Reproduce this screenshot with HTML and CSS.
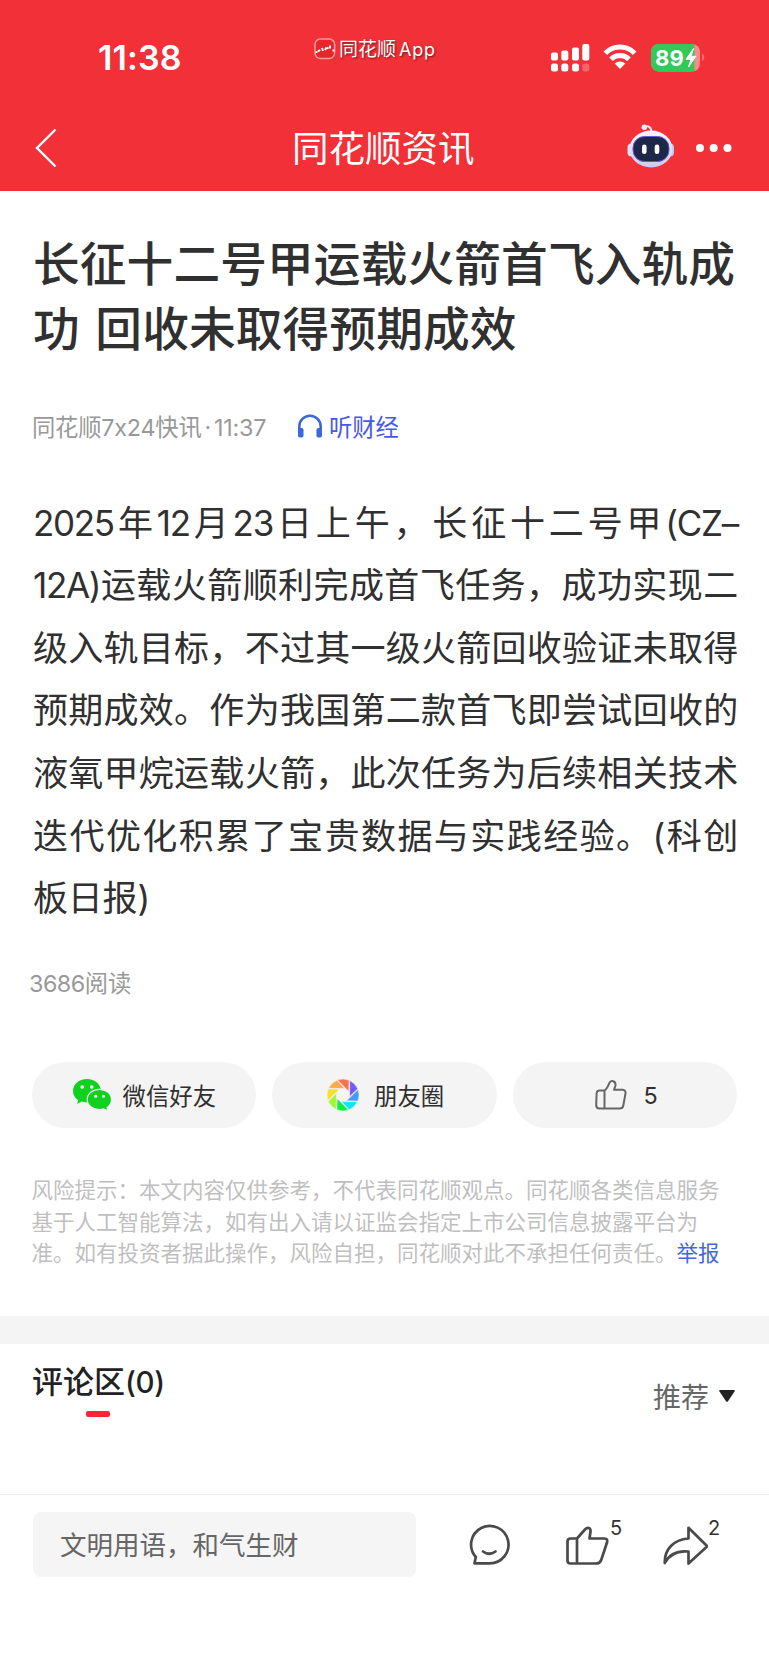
FILE: index.html
```html
<!DOCTYPE html>
<html lang="zh-CN">
<head>
<meta charset="utf-8">
<title>同花顺资讯</title>
<link rel="stylesheet" href="styles.css">
</head>
<body>
<header class="top">
  <div class="status">
    <div class="time">11:38</div>
    <div class="appmark">
      <svg width="22" height="22" viewBox="0 0 22 22"><rect x="1" y="1" width="19.600" height="19.600" rx="5.500" fill="#e5262b" stroke="#ff9a9c" stroke-width="1.500"/><path d="M1.500 14h2M4 13.500l2-1.500M8 10l1 3M11 12l1.500-2.500M13 10.500l1.500-1M16 7.500v3M18.500 12.500h2" stroke="#fff" stroke-width="2" fill="none"/></svg>
      <span>同花顺</span><span class="app">App</span>
    </div>
    <div class="sys">
      <svg class="signal" width="39" height="28" viewBox="0 0 39 28" fill="#fff"><rect x="0" y="8.500" width="7" height="8" rx="2"/><rect x="10.300" y="6.500" width="7" height="10" rx="2"/><rect x="21" y="3.500" width="7" height="13" rx="2"/><rect x="31.300" y="0" width="7" height="16.500" rx="2"/><rect x="0" y="19.500" width="7" height="8" rx="2.500"/><rect x="10.300" y="19.500" width="7" height="8" rx="2.500"/><rect x="21" y="19.500" width="7" height="8" rx="2.500"/><rect x="31.300" y="19.500" width="7" height="8" rx="2.500" opacity=".25"/></svg>
      <svg class="wifi" width="34" height="26" viewBox="0 0 34 26" fill="none" stroke="#fff" stroke-width="5"><path d="M2.300 9.300C10.500 1 23.500 1 31.700 9.300"/><path d="M8 15.300c5-5 13-5 18 0"/><path d="M11.700 19.500c3-2.800 7.600-2.800 10.600 0L17 25z" fill="#fff" stroke="none"/></svg>
      <svg class="battery" width="54" height="28" viewBox="0 0 54 28"><defs><clipPath id="b"><rect x="0" y="0" width="49" height="27.500" rx="8"/></clipPath></defs><g clip-path="url(#b)"><rect width="49" height="28" fill="#f88"/><rect width="43.500" height="28" fill="#34c759"/></g><path d="M51 9.500c3 1.500 3 6.500 0 8z" fill="#f6696e"/><text x="4" y="22" class="level">89</text><path d="M42.500 4.500L35 15.300h5L37.500 23 45 12.300h-5z" fill="#fff" stroke="#fff"/></svg>
    </div>
  </div>
  <div class="nav">
    <svg class="back" width="22" height="40" viewBox="0 0 22 40"><path d="M20.500 1.500L2 20l18.500 18.500" fill="none" stroke="#fff" stroke-width="2.400"/></svg>
    <h1>同花顺资讯</h1>
    <svg class="bot" width="48" height="44" viewBox="0 0 48 44"><defs><linearGradient id="g" x1="0" y1="0" x2="0" y2="1"><stop offset="0" stop-color="#f7f7ff"/><stop offset="1" stop-color="#c9cbee"/></linearGradient></defs><path d="M17 3c5-2 7 1 7.500 4" fill="none" stroke="#e6e3fa" stroke-width="2"/><circle cx="17.300" cy="3.200" r="2.700" fill="#eeeafd"/><rect x=".5" y="19.500" width="8" height="13" rx="4" fill="#dedff8"/><rect x="39" y="19.500" width="8" height="13" rx="4" fill="#c5c7ef"/><ellipse cx="24" cy="25" rx="21.500" ry="18.500" fill="url(#g)"/><rect x="6" y="12.500" width="36" height="25" rx="11.500" fill="#1d2849" stroke="#6c52dd"/><rect x="15" y="20.500" width="4.600" height="9.500" rx="2.300" fill="#fff"/><rect x="27.700" y="20.500" width="4.600" height="9.500" rx="2.300" fill="#fff"/></svg>
    <svg class="dots" width="36" height="8" viewBox="0 0 36 8" fill="#fff"><circle cx="4" cy="4" r="4"/><circle cx="17.700" cy="4" r="4"/><circle cx="31.500" cy="4" r="4"/></svg>
  </div>
</header>
<main>
  <article>
    <h2 class="headline"><span class="line">长征十二号甲运载火箭首飞入轨成</span><span class="line second">功 回收未取得预期成效</span></h2>
    <div class="meta">
      <span class="source">同花顺7x24快讯<i>·</i>11:37</span>
      <svg width="26" height="24" viewBox="0 0 26 24"><path d="M2.300 20V12.500a10.700 10.700 0 0 1 21.400 0V20" fill="none" stroke="#3b68dd" stroke-width="2.600"/><rect x="1" y="14" width="5.500" height="9.500" rx="1.800" fill="#3b68dd"/><rect x="19.500" y="14" width="5.500" height="9.500" rx="1.800" fill="#3b68dd"/></svg>
      <span class="listen">听财经</span>
    </div>
    <div class="body">
      <p><b>2025</b>年<b>12</b>月<b>23</b>日上午，长征十二号甲<b>(CZ–</b></p>
      <p><b>12A)</b>运载火箭顺利完成首飞任务，成功实现二</p>
      <p>级入轨目标，不过其一级火箭回收验证未取得</p>
      <p>预期成效。作为我国第二款首飞即尝试回收的</p>
      <p>液氧甲烷运载火箭，此次任务为后续相关技术</p>
      <p>迭代优化积累了宝贵数据与实践经验。(科创</p>
      <p class="last">板日报)</p>
    </div>
    <div class="reads"><b>3686</b>阅读</div>
    <div class="share">
      <div class="pill wechat"><svg width="39" height="32" viewBox="0 0 39 32"><path d="M14 0C6 0 0 5.300 0 12c0 4 2 7 5.200 9.200L4.200 25l4.600-2.400c1.700.5 3.400.8 5.200.8 8 0 14-5 14-11.400S22 0 14 0z" fill="#10d020"/><path d="M26.500 10.300c-7 0-12.300 4.500-12.300 10.200s5.300 10 12.300 10c1.300 0 2.700-.2 4-.6l4.500 2-.9-3.400c2.800-1.900 4.400-4.700 4.400-8 0-5.700-5-10.200-12-10.200z" fill="#10d020" stroke="#f4f4f4" stroke-width="1.200"/><g fill="#fff"><circle cx="9.200" cy="8" r="1.800"/><circle cx="18.700" cy="8" r="1.800"/><circle cx="22.700" cy="17.200" r="1.500"/><circle cx="30.500" cy="17.200" r="1.500"/></g></svg><span>微信好友</span></div>
      <div class="pill moments"><svg width="32" height="32" viewBox="-16 -16 32 32"><g stroke="#f4f4f4" stroke-width=".6"><path d="M-5.500-15A16 16 0 0 1 6.100-14.800L5.800-3.500z" fill="#ff704f"/><path d="M-5.500-15A16 16 0 0 1 6.100-14.800L5.800-3.500z" fill="#7557fc" transform="rotate(45)"/><path d="M-5.500-15A16 16 0 0 1 6.100-14.800L5.800-3.500z" fill="#419dfb" transform="rotate(90)"/><path d="M-5.500-15A16 16 0 0 1 6.100-14.800L5.800-3.500z" fill="#0ee5f7" transform="rotate(135)"/><path d="M-5.500-15A16 16 0 0 1 6.100-14.800L5.800-3.500z" fill="#08f33d" transform="rotate(180)"/><path d="M-5.500-15A16 16 0 0 1 6.100-14.800L5.800-3.500z" fill="#a1f536" transform="rotate(225)"/><path d="M-5.500-15A16 16 0 0 1 6.100-14.800L5.800-3.500z" fill="#f5df32" transform="rotate(270)"/><path d="M-5.500-15A16 16 0 0 1 6.100-14.800L5.800-3.500z" fill="#ffaa43" transform="rotate(315)"/></g></svg><span>朋友圈</span></div>
      <div class="pill like"><svg width="32" height="30" viewBox="0 0 32 30" fill="none" stroke="#666" stroke-width="2" stroke-linejoin="round"><path d="M9.500 10.500H4.500Q1.700 10.500 1.600 13.500L1.200 25Q1.200 28.500 4.500 28.500H24.500Q27.800 28.500 28.300 25.500L30.500 13.500Q30.800 10 27.800 9.800H19L20.500 5.500C21 .8 15.800-.3 14.300 3.200C13 6.500 12 9 9.500 10.500V28.500"/></svg><span>5</span></div>
    </div>
    <div class="risk"><p>风险提示：本文内容仅供参考，不代表同花顺观点。同花顺各类信息服务</p><p>基于人工智能算法，如有出入请以证监会指定上市公司信息披露平台为</p><p>准。如有投资者据此操作，风险自担，同花顺对此不承担任何责任。<a>举报</a></p></div>
  </article>
  <section class="comments">
    <div class="tab"><h3>评论区<span>(0)</span></h3><div class="bar"></div></div>
    <div class="sort"><span>推荐</span><svg width="16" height="12" viewBox="0 0 16 12"><path d="M1 0h14q1.300.3.500 1.500L9 11.200q-1 1.100-2 0L.5 1.500Q-.3.300 1 0z" fill="#222"/></svg></div>
  </section>
</main>
<footer>
  <div class="input">文明用语，和气生财</div>
  <svg class="comment" width="42" height="42" viewBox="0 0 42 42" fill="none" stroke="#4a4a4a" stroke-width="2.700" stroke-linejoin="round" stroke-linecap="round"><path d="M6.800 33A18.700 18.700 0 1 1 20.500 39.300H5.500Z"/><path d="M14 27.500q6 4.500 12.500 0"/></svg>
  <div class="act thumb"><svg width="43" height="39" viewBox="0 0 43 39" fill="none" stroke="#4a4a4a" stroke-width="2.700" stroke-linejoin="round"><path d="M11 12.500H4.500Q1.500 12.500 1.500 15.500V34.500Q1.500 37.500 4.500 37.500H30Q34 37.500 35.200 34L41 16.500Q42 12.500 38.500 12.500H23.500L24.500 5.500C24.800 1.500 21.500.8 19 3.500L11 12.500V37.500"/></svg><sup>5</sup></div>
  <div class="act fwd"><svg width="45" height="39" viewBox="0 0 45 39" fill="none" stroke="#4a4a4a" stroke-width="2.700" stroke-linejoin="round"><path d="M25.500 1.800L43.500 19.500Q44 20.300 43.500 21L25.500 37.500V25.500C15 24.500 7 27 1.800 37C1.300 24 10 13.500 25.500 12.500Z"/></svg><sup>2</sup></div>
</footer>
</body>
</html>
```
FILE: styles.css
```css
* { box-sizing: border-box; }
body { margin: 0; width: 769px; height: 1665px; background: #fff; color: #303030; font-family: Inter, "Noto Sans CJK SC", sans-serif; overflow: hidden; display: flex; flex-direction: column; }
h1, h2, h3, p { margin: 0; font-weight: 400; }
b { font-weight: 400; }
svg { display: block; flex: none; }
.top { height: 191px; background: #f23038; color: #fff; padding-top: 38px; }
.status { height: 40px; display: flex; align-items: flex-start; }
.time { width: 314px; padding-left: 98px; font-size: 34px; font-weight: 600; line-height: 39px; letter-spacing: .1px; }
.appmark { width: 237px; display: flex; align-items: center; height: 22px; font-size: 19px; line-height: 22px; text-shadow: 1px 1px 2px #7b1015; }
.appmark span { margin-left: 3px; position: relative; top: 1px; }
.appmark .app { font-size: 18px; letter-spacing: .8px; }
.sys { display: flex; padding-top: 6px; }
.wifi { margin: 0 0 0 13px; }
.battery { margin-left: 14px; }
.level { font: 700 22px Inter, sans-serif; fill: #fff; letter-spacing: .3px; }
.nav { height: 140px; display: flex; align-items: center; padding: 0 36px 0 35px; }
.back { margin-top: -1px; }
.nav h1 { margin-left: 235px; width: 335px; font-size: 36.500px; line-height: 50px; padding-top: 1px; }
.bot { margin-top: -5px; }
.dots { margin-left: 21px; }
article { height: 1125px; padding: 41px 32px 0; }
.headline { font-size: 46.700px; line-height: 64.600px; font-weight: 500; color: #303030; padding-left: 1px; letter-spacing: .12px; }
.headline .line { display: block; white-space: pre; }
.headline .second { word-spacing: 3px; }
.meta { margin-top: 49px; height: 32px; display: flex; align-items: center; font-size: 23.300px; color: #999; white-space: nowrap; }
.source { width: 265px; letter-spacing: -.2px; }
.source i { font-style: normal; margin: 0 3px; }
.listen { margin-left: 6px; color: #4859e6; }
.body { margin-top: 49.500px; padding: 0 0 0 1px; font-size: 35px; line-height: 62.600px; }
.body p { height: 62.600px; width: 705px; text-align: justify; text-align-last: justify; white-space: nowrap; letter-spacing: -.2px; }
.body b { letter-spacing: -1.300px; }
.body .last { text-align-last: left; }
.reads { margin: 38px 0 0 -3px; height: 32px; line-height: 32px; font-size: 23.300px; color: #999; }
.reads b { letter-spacing: -.5px; }
.share { margin: 62.500px 0 0 -.5px; display: grid; grid-template-columns: repeat(3, 224.500px); gap: 16px; }
.pill { height: 66px; border-radius: 33px; background: #f4f4f4; display: flex; align-items: center; font-size: 23.400px; padding-left: 41px; }
.pill span { margin-left: 11px; }
.moments { padding-left: 55px; }
.moments span { margin-left: 15px; }
.like { padding-left: 82px; }
.like span { margin-left: 17px; }
.risk { margin: 47px 0 0 -.5px; font-size: 21.500px; line-height: 31.300px; color: #bfbfbf; white-space: nowrap; }
.risk a { color: #4168dc; }
.comments { border-top: 28px solid #f4f4f4; height: 178px; padding: 18px 34px 0 32px; display: flex; justify-content: space-between; }
.tab { width: 132px; }
.tab h3 { font-size: 31px; line-height: 40px; font-weight: 500; color: #222; white-space: nowrap; }
.tab span { font-size: 29.500px; letter-spacing: -.3px; }
.bar { width: 24px; height: 6px; border-radius: 2px; background: #ff2436; margin: 9px 0 0 54px; }
.sort { display: flex; align-items: center; height: 40px; margin-top: 14px; font-size: 28px; color: #666; gap: 10px; }
footer { height: 171px; border-top: 1px solid #eee; padding: 17px 0 0 33px; display: flex; }
.input { width: 383px; height: 65px; border-radius: 8px; background: #f5f5f5; color: #666; font-size: 26.500px; line-height: 67px; padding-left: 27px; }
.comment { margin: 12px 0 0 53px; }
.act { display: flex; margin: 14px 0 0 55px; position: relative; }
.act sup { position: absolute; left: 44px; top: -10px; font-size: 20px; line-height: 24px; color: #333; }
.fwd { margin-left: 54px; }
.fwd sup { left: 45px; }
```
